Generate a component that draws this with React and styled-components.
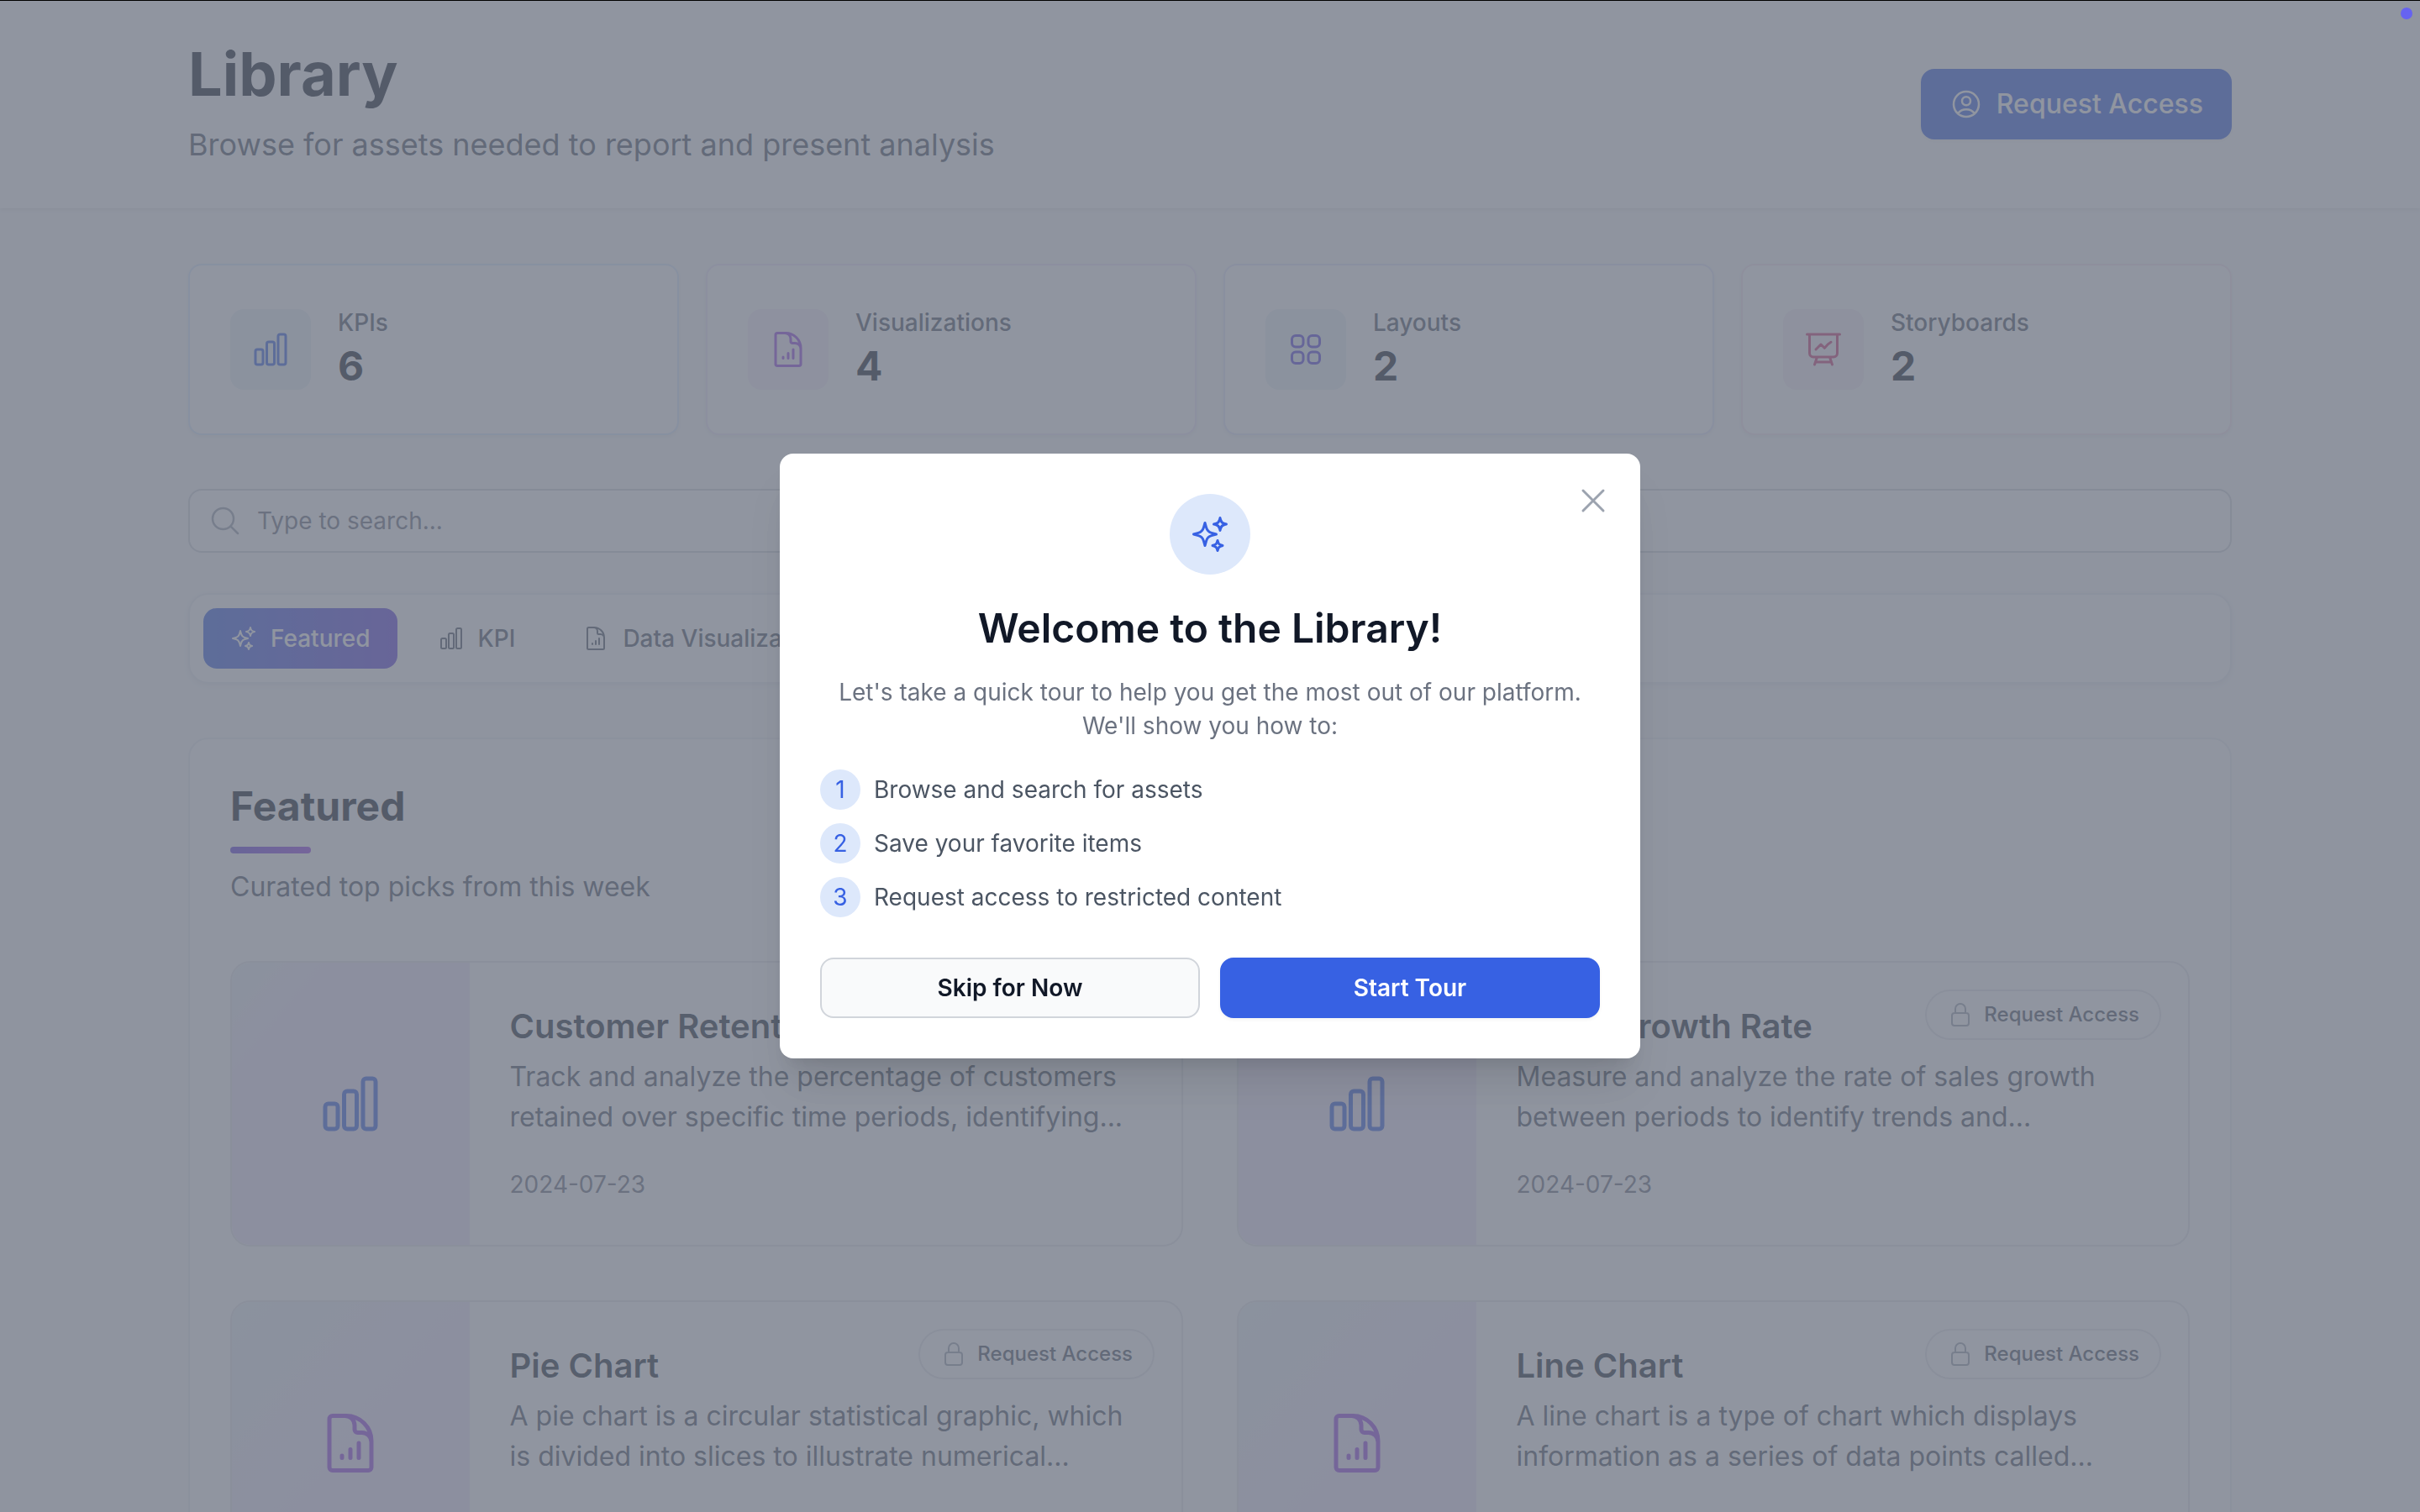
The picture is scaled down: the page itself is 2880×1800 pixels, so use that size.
import React from "react";
import styled, { createGlobalStyle, css } from "styled-components";
import {
  HiOutlineChartBar,
  HiOutlineDocumentChartBar,
  HiOutlineLockClosed,
  HiOutlineMagnifyingGlass,
  HiOutlinePresentationChartLine,
  HiOutlineSparkles,
  HiOutlineSquares2X2,
  HiOutlineUserCircle,
  HiOutlineXMark,
} from "react-icons/hi2";

const GlobalStyle = createGlobalStyle`
  *, *::before, *::after { box-sizing: border-box; }
  body {
    margin: 0;
    font-family: Inter, "Liberation Sans", sans-serif;
    font-size: 28px;
    line-height: 40px;
    color: #111827;
    -webkit-font-smoothing: antialiased;
  }
  h1, h2, h3, p, ol, ul, dl, dd { margin: 0; padding: 0; }
  ol, ul { list-style: none; }
  button, input { font: inherit; color: inherit; }
  svg { display: block; flex-shrink: 0; }
`;

const Page = styled.div`
  height: 100vh;
  overflow: hidden;
  background: #f9fafb;
`;

const Container = styled.div`
  max-width: 2560px;
  margin: 0 auto;
  padding: 0 64px;
`;

const Header = styled.header`
  background: #fff;
  box-shadow: 0 2px 4px rgba(0, 0, 0, 0.08);
`;

const HeaderRow = styled(Container)`
  display: flex;
  align-items: center;
  justify-content: space-between;
  padding-top: 48px;
  padding-bottom: 48px;
`;

const PageTitle = styled.h1`
  font-size: 72px;
  line-height: 80px;
  font-weight: 700;
`;

const PageLead = styled.p`
  margin-top: 16px;
  font-size: 36px;
  line-height: 56px;
  color: #4b5563;
`;

const PrimaryButton = styled.button`
  display: flex;
  align-items: center;
  gap: 16px;
  padding: 16px 32px;
  border: 2px solid #3761e3;
  border-radius: 16px;
  background: #3761e3;
  color: #fff;
  font-size: 32px;
  line-height: 48px;
  font-weight: 500;
  box-shadow: 0 2px 4px rgba(0, 0, 0, 0.05);
`;

const Main = styled(Container).attrs({ as: "main" })`
  display: flex;
  flex-direction: column;
  padding-top: 66px;
`;

const Stats = styled.dl`
  display: grid;
  grid-template-columns: repeat(4, 1fr);
  gap: 32px;
`;

const StatCard = styled.div`
  display: flex;
  align-items: center;
  gap: 32px;
  padding: 48px;
  border: 2px solid ${(p) => p.$border};
  border-radius: 16px;
  background: #fff;
  box-shadow: 0 2px 4px rgba(0, 0, 0, 0.05);
`;

const StatIcon = styled.span`
  display: grid;
  place-items: center;
  width: 96px;
  height: 96px;
  border-radius: 16px;
  background: ${(p) => p.$tint};
  color: ${(p) => p.$color};
`;

const StatLabel = styled.dt`
  color: #4b5563;
  font-weight: 500;
`;

const StatValue = styled.dd`
  font-size: 48px;
  line-height: 64px;
  font-weight: 700;
`;

const SearchBox = styled.label`
  display: flex;
  align-items: center;
  gap: 18px;
  margin-top: 64px;
  padding: 16px 22px;
  border: 2px solid #d1d5db;
  border-radius: 16px;
  background: #fff;
  color: #9ca3af;
`;

const SearchInput = styled.input`
  flex: 1;
  height: 40px;
  padding: 0;
  border: 0;
  outline: 0;
  background: none;
  color: #111827;
  &::placeholder {
    color: #6b7280;
    opacity: 1;
  }
`;

const Tabs = styled.nav`
  display: flex;
  gap: 16px;
  margin-top: 48px;
  padding: 16px;
  border: 2px solid #eceef1;
  border-radius: 24px;
  background: #fff;
  box-shadow: 0 2px 6px rgba(0, 0, 0, 0.06);
`;

const Tab = styled.button`
  display: flex;
  align-items: center;
  gap: 16px;
  padding: 16px 32px;
  border: 0;
  border-radius: 16px;
  background: none;
  color: #4b5563;
  font-weight: 500;
  ${(p) =>
    p.$active &&
    css`
      background: linear-gradient(to right, #3761e3, #6041de);
      color: #fff;
    `}
`;

const Panel = styled.section`
  margin-top: 64px;
  padding: 48px;
  border: 2px solid #eceef1;
  border-radius: 24px;
  background: #fff;
`;

const PanelTitle = styled.h2`
  font-size: 48px;
  line-height: 64px;
  font-weight: 700;
  &::after {
    content: "";
    display: block;
    width: 96px;
    height: 8px;
    margin-top: 16px;
    border-radius: 4px;
    background: linear-gradient(to right, #6041de, #9540e6);
  }
`;

const PanelLead = styled.p`
  margin-top: 16px;
  font-size: 32px;
  line-height: 48px;
  color: #4b5563;
`;

const AssetGrid = styled.ul`
  display: grid;
  grid-template-columns: repeat(2, 1fr);
  gap: 64px;
  margin-top: 64px;
`;

const AssetCard = styled.li`
  position: relative;
  display: flex;
  overflow: hidden;
  border: 2px solid #e5e7eb;
  border-radius: 24px;
  background: #fff;
`;

const Thumb = styled.div`
  display: grid;
  place-items: center;
  width: 25%;
  background: linear-gradient(to bottom right, #e9f2f6, #f0e8fa ${(p) => p.$reach});
  color: ${(p) => p.$color};
`;

const AssetBody = styled.div`
  flex: 1;
  min-width: 0;
  padding: 48px;
`;

const AssetTitle = styled.h3`
  color: #1f2937;
  font-size: 40px;
  line-height: 56px;
  font-weight: 600;
`;

const AssetText = styled.p`
  margin-top: 8px;
  font-size: 32px;
  line-height: 48px;
  color: #4b5563;
`;

const AssetDate = styled.time`
  display: block;
  margin-top: 32px;
  line-height: 48px;
  color: #6b7280;
`;

const AccessBadge = styled.button`
  position: absolute;
  top: 32px;
  right: 32px;
  display: flex;
  align-items: center;
  gap: 12px;
  padding: 12px 24px;
  border: 2px solid #e5e7eb;
  border-radius: 30px;
  background: #fff;
  color: #4b5563;
  font-size: 24px;
  line-height: 32px;
  font-weight: 500;
  svg { color: #9ca3af; }
`;

const Backdrop = styled.div`
  position: fixed;
  inset: 0;
  display: grid;
  place-items: center;
  background: rgba(107, 114, 128, 0.75);
`;

const Dialog = styled.div`
  position: relative;
  width: 100%;
  max-width: 1024px;
  padding: 48px;
  border-radius: 16px;
  background: #fff;
  text-align: center;
  box-shadow: 0 40px 50px -10px rgba(0, 0, 0, 0.1), 0 16px 20px -12px rgba(0, 0, 0, 0.1);
`;

const CloseButton = styled.button`
  position: absolute;
  top: 32px;
  right: 32px;
  padding: 0;
  border: 0;
  background: none;
  color: #9ca3af;
`;

const DialogIcon = styled.div`
  display: grid;
  place-items: center;
  width: 96px;
  height: 96px;
  margin: 0 auto;
  border-radius: 50%;
  background: #dde8fb;
  color: #3761e3;
`;

const DialogTitle = styled.h2`
  margin-top: 32px;
  font-size: 48px;
  line-height: 64px;
  font-weight: 600;
`;

const DialogText = styled.p`
  margin-top: 24px;
  color: #6b7280;
`;

const Steps = styled.ol`
  display: grid;
  gap: 16px;
  margin-top: 32px;
`;

const Step = styled.li`
  display: flex;
  align-items: center;
  gap: 16px;
  color: #4b5563;
`;

const StepNumber = styled.span`
  width: 48px;
  border-radius: 50%;
  background: #dde8fb;
  color: #3761e3;
  line-height: 48px;
  text-align: center;
`;

const Actions = styled.div`
  display: grid;
  grid-template-columns: 1fr 1fr;
  gap: 24px;
  margin-top: 48px;
`;

const ActionButton = styled.button`
  padding: 14px 24px;
  border: 2px solid ${(p) => (p.$primary ? "#3761e3" : "#d1d5db")};
  border-radius: 16px;
  background: ${(p) => (p.$primary ? "#3761e3" : "#f9fafb")};
  color: ${(p) => (p.$primary ? "#fff" : "#111827")};
  font-weight: 600;
  box-shadow: ${(p) => (p.$primary ? "0 2px 4px rgba(0, 0, 0, 0.05)" : "none")};
`;

const TopEdge = styled.div`
  position: fixed;
  inset: 0 0 auto;
  height: 1px;
  background: #000;
`;

const StatusDot = styled.span`
  position: fixed;
  top: 9px;
  right: 9px;
  width: 14px;
  height: 14px;
  border-radius: 50%;
  background: #6663f1;
`;

const blue = "#3761e3";
const purple = "#9344e4";

const stats = [
  { label: "KPIs", value: 6, Icon: HiOutlineChartBar, color: blue, tint: "#eaf3f8", border: "#dbeafe" },
  { label: "Visualizations", value: 4, Icon: HiOutlineDocumentChartBar, color: purple, tint: "#f6eefa", border: "#f0e8fa" },
  { label: "Layouts", value: 2, Icon: HiOutlineSquares2X2, color: "#5a45de", tint: "#eaf3f8", border: "#e4e5fb" },
  { label: "Storyboards", value: 2, Icon: HiOutlinePresentationChartLine, color: "#cb3874", tint: "#f6eef6", border: "#f6e6f0" },
];

const tabs = [
  { label: "Featured", Icon: HiOutlineSparkles },
  { label: "KPI", Icon: HiOutlineChartBar },
  { label: "Data Visualization", Icon: HiOutlineDocumentChartBar },
];

const kpi = { Icon: HiOutlineChartBar, color: blue, reach: "20%" };
const chart = { Icon: HiOutlineDocumentChartBar, color: purple, reach: "50%" };

const assets = [
  {
    ...kpi,
    title: "Customer Retention Rate",
    lines: ["Track and analyze the percentage of customers", "retained over specific time periods, identifying..."],
    date: "2024-07-23",
  },
  {
    ...kpi,
    title: "Sales Growth Rate",
    lines: ["Measure and analyze the rate of sales growth", "between periods to identify trends and..."],
    date: "2024-07-23",
    locked: true,
  },
  {
    ...chart,
    title: "Pie Chart",
    lines: ["A pie chart is a circular statistical graphic, which", "is divided into slices to illustrate numerical..."],
    date: "2024-07-23",
    locked: true,
  },
  {
    ...chart,
    title: "Line Chart",
    lines: ["A line chart is a type of chart which displays", "information as a series of data points called..."],
    date: "2024-07-23",
    locked: true,
  },
];

const steps = ["Browse and search for assets", "Save your favorite items", "Request access to restricted content"];

function Asset({ Icon, color, reach, title, lines, date, locked }) {
  return (
    <AssetCard>
      <Thumb $reach={reach} $color={color}>
        <Icon size={80} />
      </Thumb>
      <AssetBody>
        <AssetTitle>{title}</AssetTitle>
        <AssetText>
          {lines[0]}
          <br />
          {lines[1]}
        </AssetText>
        <AssetDate dateTime={date}>{date}</AssetDate>
      </AssetBody>
      {locked && (
        <AccessBadge type="button">
          <HiOutlineLockClosed size={32} />
          Request Access
        </AccessBadge>
      )}
    </AssetCard>
  );
}

function WelcomeDialog() {
  return (
    <Backdrop>
      <Dialog role="dialog" aria-modal="true" aria-labelledby="welcome-title">
        <CloseButton type="button" aria-label="Close">
          <HiOutlineXMark size={48} />
        </CloseButton>
        <DialogIcon>
          <HiOutlineSparkles size={48} />
        </DialogIcon>
        <DialogTitle id="welcome-title">Welcome to the Library!</DialogTitle>
        <DialogText>
          Let's take a quick tour to help you get the most out of our platform. We'll show you how to:
        </DialogText>
        <Steps>
          {steps.map((step, i) => (
            <Step key={step}>
              <StepNumber>{i + 1}</StepNumber>
              {step}
            </Step>
          ))}
        </Steps>
        <Actions>
          <ActionButton type="button">Skip for Now</ActionButton>
          <ActionButton type="button" $primary>
            Start Tour
          </ActionButton>
        </Actions>
      </Dialog>
    </Backdrop>
  );
}

export default function App() {
  return (
    <>
      <GlobalStyle />
      <Page>
        <Header>
          <HeaderRow>
            <div>
              <PageTitle>Library</PageTitle>
              <PageLead>Browse for assets needed to report and present analysis</PageLead>
            </div>
            <PrimaryButton type="button">
              <HiOutlineUserCircle size={40} />
              Request Access
            </PrimaryButton>
          </HeaderRow>
        </Header>
        <Main>
          <Stats>
            {stats.map(({ label, value, Icon, color, tint, border }) => (
              <StatCard key={label} $border={border}>
                <StatIcon $tint={tint} $color={color}>
                  <Icon size={48} />
                </StatIcon>
                <div>
                  <StatLabel>{label}</StatLabel>
                  <StatValue>{value}</StatValue>
                </div>
              </StatCard>
            ))}
          </Stats>
          <SearchBox>
            <HiOutlineMagnifyingGlass size={40} />
            <SearchInput type="search" aria-label="Search" placeholder="Type to search..." />
          </SearchBox>
          <Tabs>
            {tabs.map(({ label, Icon }, i) => (
              <Tab key={label} type="button" $active={i === 0}>
                <Icon size={32} />
                {label}
              </Tab>
            ))}
          </Tabs>
          <Panel>
            <PanelTitle>Featured</PanelTitle>
            <PanelLead>Curated top picks from this week</PanelLead>
            <AssetGrid>
              {assets.map((asset) => (
                <Asset key={asset.title} {...asset} />
              ))}
            </AssetGrid>
          </Panel>
        </Main>
      </Page>
      <WelcomeDialog />
      <TopEdge />
      <StatusDot />
    </>
  );
}
